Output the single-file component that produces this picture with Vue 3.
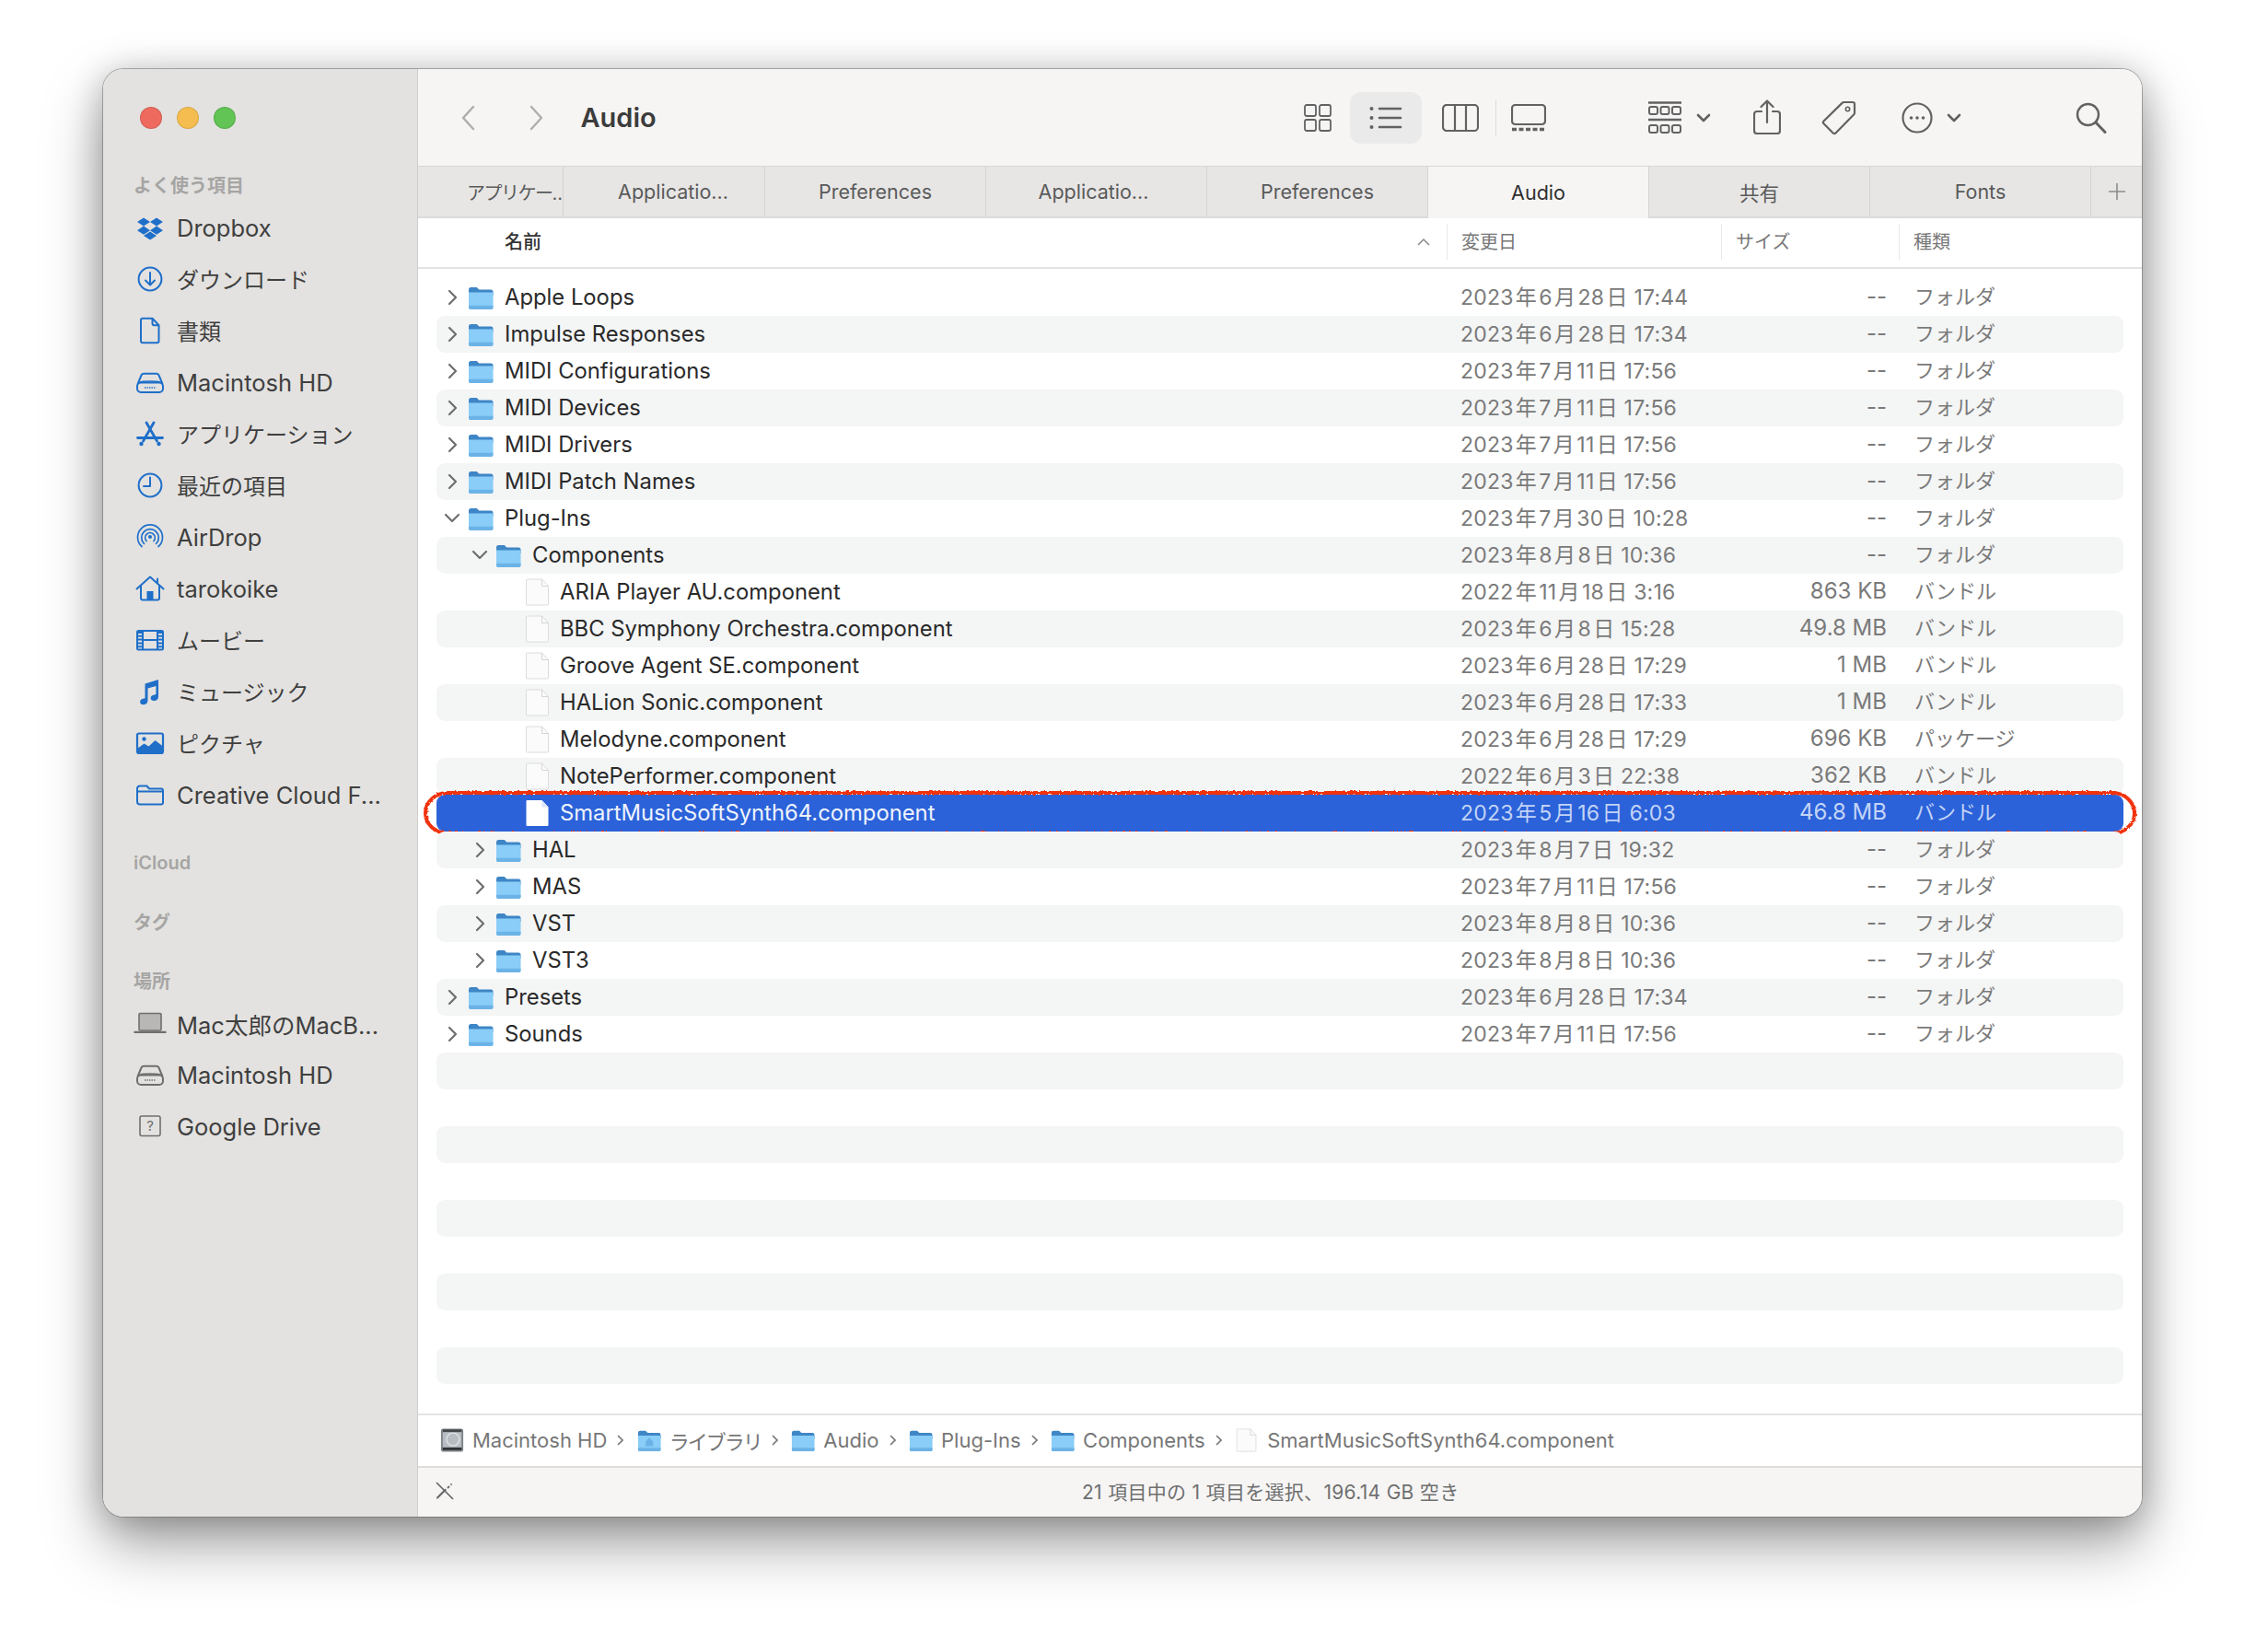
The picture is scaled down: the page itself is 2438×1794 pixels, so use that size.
<script setup>
const favorites = [
  { icon: 'i-dropbox', label: 'Dropbox' },
  { icon: 'i-download', label: 'ダウンロード', jp: true },
  { icon: 'i-doc', label: '書類', jp: true },
  { icon: 'i-hd', label: 'Macintosh HD' },
  { icon: 'i-apps', label: 'アプリケーション', jp: true },
  { icon: 'i-clock', label: '最近の項目', jp: true },
  { icon: 'i-airdrop', label: 'AirDrop' },
  { icon: 'i-home', label: 'tarokoike' },
  { icon: 'i-film', label: 'ムービー', jp: true },
  { icon: 'i-music', label: 'ミュージック', jp: true },
  { icon: 'i-photo', label: 'ピクチャ', jp: true },
  { icon: 'i-folder-line', label: 'Creative Cloud F...' },
]

const places = [
  { icon: 'i-laptop', label: 'Mac太郎のMacB...' },
  { icon: 'i-hd', label: 'Macintosh HD' },
  { icon: 'i-unknown', label: 'Google Drive' },
]

const tabs = [
  { label: 'アプリケー…', cls: 'first' },
  { label: 'Applicatio...', cls: 'second' },
  { label: 'Preferences' },
  { label: 'Applicatio...', cls: 'fourth' },
  { label: 'Preferences' },
  { label: 'Audio', cls: 'active' },
  { label: '共有' },
  { label: 'Fonts' },
]

const F = 'フォルダ'
const B = 'バンドル'
// name, depth, arrow (r / d / none), date, size, kind
const rows = [
  ['Apple Loops', 0, 'r', '2023年6月28日 17:44', '--', F],
  ['Impulse Responses', 0, 'r', '2023年6月28日 17:34', '--', F],
  ['MIDI Configurations', 0, 'r', '2023年7月11日 17:56', '--', F],
  ['MIDI Devices', 0, 'r', '2023年7月11日 17:56', '--', F],
  ['MIDI Drivers', 0, 'r', '2023年7月11日 17:56', '--', F],
  ['MIDI Patch Names', 0, 'r', '2023年7月11日 17:56', '--', F],
  ['Plug-Ins', 0, 'd', '2023年7月30日 10:28', '--', F],
  ['Components', 1, 'd', '2023年8月8日 10:36', '--', F],
  ['ARIA Player AU.component', 2, '', '2022年11月18日 3:16', '863 KB', B],
  ['BBC Symphony Orchestra.component', 2, '', '2023年6月8日 15:28', '49.8 MB', B],
  ['Groove Agent SE.component', 2, '', '2023年6月28日 17:29', '1 MB', B],
  ['HALion Sonic.component', 2, '', '2023年6月28日 17:33', '1 MB', B],
  ['Melodyne.component', 2, '', '2023年6月28日 17:29', '696 KB', 'パッケージ'],
  ['NotePerformer.component', 2, '', '2022年6月3日 22:38', '362 KB', B],
  ['SmartMusicSoftSynth64.component', 2, '', '2023年5月16日 6:03', '46.8 MB', B],
  ['HAL', 1, 'r', '2023年8月7日 19:32', '--', F],
  ['MAS', 1, 'r', '2023年7月11日 17:56', '--', F],
  ['VST', 1, 'r', '2023年8月8日 10:36', '--', F],
  ['VST3', 1, 'r', '2023年8月8日 10:36', '--', F],
  ['Presets', 0, 'r', '2023年6月28日 17:34', '--', F],
  ['Sounds', 0, 'r', '2023年7月11日 17:56', '--', F],
]

const crumbs = [
  { icon: 'i-disk', label: 'Macintosh HD' },
  { icon: 'i-library', label: 'ライブラリ', jp: true },
  { icon: 'i-folder', label: 'Audio' },
  { icon: 'i-folder', label: 'Plug-Ins' },
  { icon: 'i-folder', label: 'Components' },
  { icon: 'i-file', label: 'SmartMusicSoftSynth64.component' },
]

// Finder puts a small gap between digits and kanji
const spaced = (s) => s.replace(/(\d)([年月日])/g, '$1\u200a$2').replace(/([年月])(\d)/g, '$1\u200a$2')
</script>

<template>
  <svg class="defs" width="0" height="0">
    <defs>
      <filter id="rough" x="-2%" y="-30%" width="104%" height="160%">
        <feTurbulence type="fractalNoise" baseFrequency="0.35" numOctaves="2" seed="4" />
        <feDisplacementMap in="SourceGraphic" scale="3.5" />
      </filter>
    </defs>

    <!-- sidebar icons, 36 box -->
    <symbol id="i-dropbox" viewBox="0 0 36 36">
      <path fill="currentColor" d="M4 12l7-4.6 7 4.6-7 4.6zM18 12l7-4.6 7 4.6-7 4.6zM4 21.2l7-4.6 7 4.6-7 4.6zM18 21.2l7-4.6 7 4.6-7 4.6zM11 27l7-4.4 7 4.4-7 4.6z" />
    </symbol>
    <symbol id="i-download" viewBox="0 0 36 36">
      <g fill="none" stroke="currentColor" stroke-width="2" stroke-linecap="round" stroke-linejoin="round">
        <circle cx="18" cy="18" r="12.4" />
        <path d="M18 11v13M13 19.5l5 5 5-5" />
      </g>
    </symbol>
    <symbol id="i-doc" viewBox="0 0 36 36">
      <g fill="none" stroke="currentColor" stroke-width="2" stroke-linejoin="round">
        <path d="M10 4.8h10.500l7 7.500v17a2 2 0 0 1-2 2H10a2 2 0 0 1-2-2V6.800a2 2 0 0 1 2-2z" />
        <path d="M20.500 4.800v5.500a2 2 0 0 0 2 2h5" />
      </g>
    </symbol>
    <symbol id="i-hd" viewBox="0 0 36 36">
      <g fill="none" stroke="currentColor" stroke-width="2" stroke-linejoin="round">
        <path d="M4.500 20l4-9.500a3 3 0 0 1 2.800-1.800h13.400a3 3 0 0 1 2.800 1.800l4 9.500" />
        <rect x="4" y="18.500" width="28" height="10.500" rx="4" />
        <path stroke-width="1.500" stroke-dasharray="1.400 1.100" d="M12 24h12" />
        <path stroke-width="1.600" d="M7 18c4-1.400 18-1.400 22 0" />
      </g>
    </symbol>
    <symbol id="i-apps" viewBox="0 0 36 36">
      <g fill="none" stroke="currentColor" stroke-width="2.800" stroke-linecap="round">
        <path d="M14 6l11.500 20M22 6L10.500 26M4.500 22.500h27" />
      </g>
      <circle cx="8.500" cy="29" r="2.200" fill="currentColor" />
      <circle cx="27.500" cy="29" r="2.200" fill="currentColor" />
    </symbol>
    <symbol id="i-clock" viewBox="0 0 36 36">
      <g fill="none" stroke="currentColor" stroke-width="2" stroke-linecap="round" stroke-linejoin="round">
        <circle cx="18" cy="18" r="12.400" />
        <path d="M18 9.500V19h-7" />
      </g>
    </symbol>
    <symbol id="i-airdrop" viewBox="0 0 36 36">
      <g fill="none" stroke="currentColor" stroke-width="1.700" stroke-linecap="round">
        <path d="M9 28.500a13.500 13.500 0 1 1 18 0" />
        <path d="M11.500 25.500a9.300 9.300 0 1 1 13 0" />
        <path d="M14 22.500a5.300 5.300 0 1 1 8 0" />
      </g>
      <circle cx="18" cy="18" r="2" fill="currentColor" />
    </symbol>
    <symbol id="i-home" viewBox="0 0 36 36">
      <g fill="none" stroke="currentColor" stroke-width="2" stroke-linecap="round" stroke-linejoin="round">
        <path d="M3.500 18.500L18 5.500l14.500 13" />
        <path d="M8 15.500v13a2 2 0 0 0 2 2h16a2 2 0 0 0 2-2v-13" />
        <path d="M26 7.500v4.500" />
      </g>
      <rect x="14.500" y="21" width="7" height="9.500" fill="currentColor" />
    </symbol>
    <symbol id="i-film" viewBox="0 0 36 36">
      <g fill="none" stroke="currentColor" stroke-width="2">
        <rect x="4" y="8" width="28" height="20.500" rx="1.500" />
        <path d="M10 8v20.500M26 8v20.500M10 18h16" />
        <path stroke-width="5" stroke-dasharray="2 1.800" d="M7 9v19M29 9v19" />
      </g>
    </symbol>
    <symbol id="i-music" viewBox="0 0 36 36">
      <path fill="currentColor" d="M12.500 9.500L27 5v18.500c0 3-2.400 4.600-4.800 4.600-2.200 0-3.600-1.300-3.600-3 0-2 1.600-3.300 4-3.700l1.800-.4V12L15.500 14.600v13c0 3-2.400 4.600-4.800 4.600-2.200 0-3.600-1.300-3.600-3 0-2 1.600-3.300 4-3.700l1.400-.3z" />
    </symbol>
    <symbol id="i-photo" viewBox="0 0 36 36">
      <rect x="4" y="7.500" width="28" height="21.500" rx="2" fill="none" stroke="currentColor" stroke-width="2.200" />
      <path fill="currentColor" d="M4 24l7.500-5.500 5 3L23.500 15 32 21.500V29H4z" />
      <circle cx="11.500" cy="13.500" r="2.200" fill="currentColor" />
    </symbol>
    <symbol id="i-folder-line" viewBox="0 0 36 36">
      <g fill="none" stroke="currentColor" stroke-width="2" stroke-linejoin="round">
        <path d="M4 11v14.500a3 3 0 0 0 3 3h23a2 2 0 0 0 2-2V13.500a2 2 0 0 0-2-2H17l-2.500-3H7a3 3 0 0 0-3 2.500z" />
        <path d="M4 14.500h28" />
      </g>
    </symbol>
    <symbol id="i-laptop" viewBox="0 0 36 36">
      <rect x="6" y="7.500" width="24" height="18.500" rx="1.200" fill="#b8b7b5" stroke="#6f6f6f" stroke-width="1.600" />
      <path d="M0.500 27.800h35" stroke="#6f6f6f" stroke-width="2.200" />
    </symbol>
    <symbol id="i-unknown" viewBox="0 0 36 36">
      <rect x="7" y="7" width="22" height="21.500" rx="2" fill="none" stroke="currentColor" stroke-width="1.600" />
      <text x="18" y="23" text-anchor="middle" font-size="15" font-family="Inter" fill="currentColor">?</text>
    </symbol>

    <!-- list icons -->
    <symbol id="i-folder" viewBox="0 0 28 28">
      <path fill="#3e86c6" d="M1 5.500A2.500 2.500 0 0 1 3.500 3h6.300l2.400 2.400H25A2.500 2.500 0 0 1 27.500 8v4H1z" />
      <path fill="#89cdf8" d="M1 8.500h26.500v16.500a2 2 0 0 1-2 2H3a2 2 0 0 1-2-2z" />
      <path fill="#6bb3e6" d="M1 22.800h26.500V25a2 2 0 0 1-2 2H3a2 2 0 0 1-2-2z" />
    </symbol>
    <symbol id="i-library" viewBox="0 0 28 28">
      <path fill="#3e86c6" d="M1 5.500A2.500 2.500 0 0 1 3.500 3h6.300l2.400 2.400H25A2.500 2.500 0 0 1 27.500 8v4H1z" />
      <path fill="#89cdf8" d="M1 8.500h26.500v16.500a2 2 0 0 1-2 2H3a2 2 0 0 1-2-2z" />
      <path fill="#6bb3e6" d="M1 22.800h26.500V25a2 2 0 0 1-2 2H3a2 2 0 0 1-2-2zM14.200 11l4.300 4.500v5.500h-8.600v-5.500z" />
    </symbol>
    <symbol id="i-file" viewBox="0 0 28 30">
      <path fill="#fbfbfb" stroke="#dcdcdc" stroke-width="1" d="M2.500 1h16l7 7.500V28a1 1 0 0 1-1 1h-22a1 1 0 0 1-1-1V2a1 1 0 0 1 1-1z" />
      <path fill="none" stroke="#d5d5d5" stroke-width="1" d="M18.500 1v7.500h7" />
    </symbol>
    <symbol id="i-file-sel" viewBox="0 0 28 30">
      <path fill="#fff" d="M2.500 1h16l7 7.500V28a1 1 0 0 1-1 1h-22a1 1 0 0 1-1-1V2a1 1 0 0 1 1-1z" />
      <path fill="#dce6f8" d="M18.500 1v7.500h7z" />
    </symbol>
    <symbol id="i-disk" viewBox="0 0 28 28">
      <rect x="1" y="0.500" width="26" height="27" rx="2.500" fill="#7c8186" />
      <rect x="3" y="3" width="22" height="19.500" fill="#b7bdc2" />
      <circle cx="15" cy="13" r="7.500" fill="none" stroke="#dfe3e6" stroke-width="1.500" />
      <rect x="3" y="1.500" width="22" height="3" fill="#44474a" />
      <rect x="3" y="22.500" width="22" height="3" fill="#2f3133" />
    </symbol>

    <!-- toolbar icons -->
    <symbol id="i-grid" viewBox="0 0 30 30">
      <g fill="none" stroke="currentColor" stroke-width="1.800">
        <rect x="1" y="1" width="12" height="12" rx="2" />
        <rect x="17" y="1" width="12" height="12" rx="2" />
        <rect x="1" y="17" width="12" height="12" rx="2" />
        <rect x="17" y="17" width="12" height="12" rx="2" />
      </g>
    </symbol>
    <symbol id="i-list" viewBox="0 0 36 26">
      <path fill="none" stroke="currentColor" stroke-width="2.600" stroke-linecap="round" d="M11 3h23M11 13h23M11 23h23" />
      <circle cx="2.500" cy="3" r="2" fill="currentColor" />
      <circle cx="2.500" cy="13" r="2" fill="currentColor" />
      <circle cx="2.500" cy="23" r="2" fill="currentColor" />
    </symbol>
    <symbol id="i-columns" viewBox="0 0 40 30">
      <rect x="1" y="1" width="38" height="28" rx="4" fill="none" stroke="currentColor" stroke-width="2.200" />
      <path fill="none" stroke="currentColor" stroke-width="2.200" d="M14 1v28M26 1v28" />
    </symbol>
    <symbol id="i-gallery" viewBox="0 0 38 30">
      <rect x="1" y="1" width="36" height="21" rx="3.500" fill="none" stroke="currentColor" stroke-width="2.200" />
      <path fill="none" stroke="currentColor" stroke-width="3.500" stroke-dasharray="5 2.500" d="M1 27.500h36" />
    </symbol>
    <symbol id="i-group" viewBox="0 0 36 36">
      <g fill="none" stroke="currentColor">
        <path stroke-width="2.400" d="M0 1.500h36M0 20h36" />
        <g stroke-width="2">
          <rect x="1" y="6" width="9" height="8" rx="2" />
          <rect x="13.500" y="6" width="9" height="8" rx="2" />
          <rect x="26" y="6" width="9" height="8" rx="2" />
          <rect x="1" y="26" width="9" height="8" rx="2" />
          <rect x="13.500" y="26" width="9" height="8" rx="2" />
          <rect x="26" y="26" width="9" height="8" rx="2" />
        </g>
      </g>
    </symbol>
    <symbol id="i-share" viewBox="0 0 30 38">
      <g fill="none" stroke="currentColor" stroke-width="2.200" stroke-linecap="round" stroke-linejoin="round">
        <path d="M9 13H4a3 3 0 0 0-3 3v18a3 3 0 0 0 3 3h22a3 3 0 0 0 3-3V16a3 3 0 0 0-3-3h-5" />
        <path d="M15 25V1.500M8.500 8L15 1.500 21.500 8" />
      </g>
    </symbol>
    <symbol id="i-tag" viewBox="0 0 38 38">
      <g fill="none" stroke="currentColor" stroke-width="2.200" stroke-linejoin="round">
        <path d="M24.500 2h9.500a2 2 0 0 1 2 2v9.500a3 3 0 0 1-.9 2L15.500 35.500a2 2 0 0 1-2.800 0L2.500 25.300a2 2 0 0 1 0-2.800L22.500 2.900a3 3 0 0 1 2-.9z" />
      </g>
      <circle cx="28.500" cy="9.500" r="2.200" fill="none" stroke="currentColor" stroke-width="1.600" />
    </symbol>
    <symbol id="i-more" viewBox="0 0 34 34">
      <circle cx="17" cy="17" r="15.500" fill="none" stroke="currentColor" stroke-width="2.200" />
      <circle cx="10.500" cy="17" r="1.800" fill="currentColor" />
      <circle cx="17" cy="17" r="1.800" fill="currentColor" />
      <circle cx="23.500" cy="17" r="1.800" fill="currentColor" />
    </symbol>
    <symbol id="i-search" viewBox="0 0 34 34">
      <circle cx="13.500" cy="13.500" r="11.500" fill="none" stroke="currentColor" stroke-width="2.400" />
      <path d="M22 22l10 10.500" fill="none" stroke="currentColor" stroke-width="3" stroke-linecap="round" />
    </symbol>
    <symbol id="i-tools" viewBox="0 0 20 20">
      <path d="M1 1l18 18" fill="none" stroke="currentColor" stroke-width="1.700" />
      <path d="M1 19l2-1 9-9-1.500-1.500-9 9z" fill="currentColor" />
      <path d="M13 7l2-2M16.500 3.500l1-1" fill="none" stroke="currentColor" stroke-width="1.800" />
    </symbol>
  </svg>

  <div class="page">
    <div class="window">
      <aside class="sidebar">
        <div class="lights">
          <span class="light red"></span>
          <span class="light yellow"></span>
          <span class="light green"></span>
        </div>

        <div class="section-title fav-title">よく使う項目</div>
        <div class="side-item" v-for="item in favorites" :key="item.label">
          <svg class="side-icon"><use :href="'#' + item.icon" /></svg>
          <span :class="{ jp: item.jp }">{{ item.label }}</span>
        </div>

        <div class="section-title cloud-title">iCloud</div>
        <div class="section-title tag-title">タグ</div>
        <div class="section-title place-title">場所</div>
        <div class="side-item gray" v-for="item in places" :key="item.icon">
          <svg class="side-icon"><use :href="'#' + item.icon" /></svg>
          <span>{{ item.label }}</span>
        </div>
      </aside>

      <main class="main">
        <header class="toolbar">
          <svg class="nav-arrow" viewBox="0 0 20 30"><path d="M15 3L4 15l11 12" /></svg>
          <svg class="nav-arrow next" viewBox="0 0 20 30"><path d="M5 3l11 12L5 27" /></svg>
          <h1 class="title">Audio</h1>

          <svg class="tool grid-btn"><use href="#i-grid" /></svg>
          <div class="pill"><svg class="tool list-btn"><use href="#i-list" /></svg></div>
          <svg class="tool col-btn"><use href="#i-columns" /></svg>
          <span class="tool-sep"></span>
          <svg class="tool gal-btn"><use href="#i-gallery" /></svg>

          <svg class="tool group-btn"><use href="#i-group" /></svg>
          <svg class="caret" viewBox="0 0 16 10"><path d="M2 2l6 6 6-6" /></svg>
          <svg class="tool share-btn"><use href="#i-share" /></svg>
          <svg class="tool tag-btn"><use href="#i-tag" /></svg>
          <svg class="tool more-btn"><use href="#i-more" /></svg>
          <svg class="caret more-caret" viewBox="0 0 16 10"><path d="M2 2l6 6 6-6" /></svg>
          <svg class="tool search-btn"><use href="#i-search" /></svg>
        </header>

        <nav class="tabs">
          <div v-for="(t, i) in tabs" :key="i" class="tab" :class="t.cls">
            <span>{{ t.label }}</span>
          </div>
          <div class="tab plus">
            <svg viewBox="0 0 20 20" width="20" height="20"><path d="M10 1v18M1 10h18" /></svg>
          </div>
        </nav>

        <div class="col-head">
          <div class="col name-col">名前
            <svg class="sort" viewBox="0 0 14 9"><path d="M1 8l6-6 6 6" /></svg>
          </div>
          <div class="col date-col">変更日</div>
          <div class="col size-col">サイズ</div>
          <div class="col kind-col">種類</div>
        </div>

        <div class="list">
          <div
            v-for="r in rows"
            :key="r[0]"
            class="row"
            :class="{ selected: r[0].startsWith('SmartMusic') }"
          >
            <div class="name" :style="{ paddingLeft: r[1] * 30 + 'px' }">
              <span class="arrow">
                <svg v-if="r[2] === 'r'" viewBox="0 0 12 18" width="12" height="18"><path d="M3 2l7 7-7 7" /></svg>
                <svg v-if="r[2] === 'd'" viewBox="0 0 18 12" width="18" height="12"><path d="M2 2l7 7 7-7" /></svg>
              </span>
              <svg class="row-icon" :class="{ doc: !r[2] }">
                <use :href="r[2] ? '#i-folder' : r[0].startsWith('SmartMusic') ? '#i-file-sel' : '#i-file'" />
              </svg>
              <span class="name-text">{{ r[0] }}</span>
            </div>
            <div class="date">{{ spaced(r[3]) }}</div>
            <div class="size">{{ r[4] }}</div>
            <div class="kind">{{ r[5] }}</div>
            <svg v-if="r[0].startsWith('SmartMusic')" class="scribble" viewBox="0 0 1862 50" preserveAspectRatio="none">
              <rect x="3" y="3" width="1856" height="44" rx="24" filter="url(#rough)" />
            </svg>
          </div>
          <div v-for="n in 9" :key="'empty' + n" class="row"></div>
        </div>

        <div class="pathbar">
          <template v-for="(c, i) in crumbs" :key="c.label">
            <svg class="crumb-icon"><use :href="'#' + c.icon" /></svg>
            <span class="crumb" :class="{ jp: c.jp }">{{ c.label }}</span>
            <svg v-if="i < crumbs.length - 1" class="crumb-sep" viewBox="0 0 8 12"><path d="M2 1l5 5-5 5" /></svg>
          </template>
        </div>

        <footer class="status">
          <svg class="tools-icon"><use href="#i-tools" /></svg>
          <span class="status-text">21 項目中の 1 項目を選択、196.14 GB 空き</span>
        </footer>
      </main>
    </div>
  </div>
</template>

<style>
html, body {
  margin: 0;
  background: #fff;
}
</style>

<style scoped>
.defs {
  position: absolute;
}

.page {
  width: 2438px;
  height: 1794px;
  padding: 75px 0 0 112px;
  box-sizing: border-box;
  overflow: hidden;
  font-family: Inter, "Noto Sans CJK JP", sans-serif;
}

.window {
  width: 2214px;
  height: 1572px;
  display: flex;
  border-radius: 22px;
  background: #fff;
  box-shadow: 0 0 0 1px rgba(90, 90, 90, 0.45), 0 30px 64px rgba(0, 0, 0, 0.37), 0 4px 36px rgba(0, 0, 0, 0.22);
  overflow: hidden;
}

.sidebar {
  width: 342px;
  flex: none;
  box-sizing: border-box;
  padding-left: 33px;
  background: #e3e2e0;
  border-right: 1px solid #cfcecd;
  color: #3f3f3f;
}

.lights {
  display: flex;
  gap: 16px;
  margin: 41px 0 0 7px;
}
.light {
  width: 24px;
  height: 24px;
  box-sizing: border-box;
  border-radius: 50%;
  border: 1px solid rgba(0, 0, 0, 0.12);
}
.red { background: #ee6a5f; }
.yellow { background: #f5bd4f; }
.green { background: #61c454; }

.section-title {
  height: 28px;
  line-height: 28px;
  font-size: 20px;
  font-weight: 600;
  color: #a6a5a4;
}
.fav-title { margin: 48px 0 3px; }
.cloud-title { margin-top: 32px; }
.tag-title { margin-top: 37px; }
.place-title { margin: 36px 0 3px; }

.side-item {
  height: 56px;
  display: flex;
  align-items: center;
  gap: 11px;
  font-size: 25.5px;
  white-space: nowrap;
}
.side-item .jp {
  font-size: 24px;
  margin-top: -2px;
}
.side-icon {
  width: 36px;
  height: 36px;
  flex: none;
  color: #1f6fc9;
}
.gray .side-icon {
  color: #6f6f6f;
}

.main {
  flex: 1;
  min-width: 0;
  display: flex;
  flex-direction: column;
}

.toolbar {
  height: 105px;
  flex: none;
  display: flex;
  align-items: center;
  background: #f6f5f4;
  color: #626262;
}
.nav-arrow {
  width: 20px;
  height: 30px;
  margin-left: 45px;
  fill: none;
  stroke: #aeaeae;
  stroke-width: 2.4;
  stroke-linecap: round;
  stroke-linejoin: round;
}
.nav-arrow.next {
  margin-left: 53px;
}
.title {
  margin: 0 0 0 38.500px;
  width: 80px;
  font-size: 29px;
  font-weight: 600;
  color: #3c3c3c;
  white-space: nowrap;
}
.tool {
  flex: none;
}
.grid-btn { width: 30px; height: 30px; margin-left: 705.500px; }
.pill {
  width: 78px;
  height: 56px;
  margin-left: 20px;
  display: flex;
  align-items: center;
  justify-content: center;
  background: #ebeaea;
  border-radius: 12px;
}
.list-btn { width: 36px; height: 26px; }
.col-btn { width: 40px; height: 30px; margin-left: 22px; }
.tool-sep { width: 1px; height: 40px; margin-left: 18px; background: #dddcdb; }
.gal-btn { width: 38px; height: 30px; margin-left: 16px; }
.group-btn { width: 36px; height: 36px; margin-left: 111px; }
.caret {
  width: 16px;
  height: 10px;
  margin-left: 16px;
  fill: none;
  stroke: #626262;
  stroke-width: 2.6;
  stroke-linecap: round;
  stroke-linejoin: round;
}
.share-btn { width: 30px; height: 38px; margin: -2px 0 0 46px; }
.tag-btn { width: 38px; height: 38px; margin-left: 44px; }
.more-btn { width: 34px; height: 34px; margin-left: 48.500px; }
.more-caret { margin-left: 15px; }
.search-btn { width: 34px; height: 34px; margin-left: 124px; }

.tabs {
  height: 57px;
  flex: none;
  display: flex;
  box-sizing: border-box;
  background: #e7e6e5;
  border-top: 1px solid #d8d7d6;
  border-bottom: 2px solid #dcdbda;
}
.tab {
  width: 240px;
  flex: none;
  box-sizing: border-box;
  display: flex;
  align-items: center;
  justify-content: center;
  border-right: 1px solid #d5d4d3;
  font-size: 21.500px;
  color: #5a5a5a;
  white-space: nowrap;
  overflow: hidden;
}
.tab.first {
  width: 158px;
  justify-content: flex-start;
  padding-left: 53px;
  font-size: 20px;
  letter-spacing: -1.500px;
}
.tab.second {
  width: 219px;
  padding-left: 20px;
}
.tab.fourth {
  padding-right: 6px;
}
.tab.active {
  background: #f6f5f4;
  color: #2f2f2f;
  margin-bottom: -2px;
}
.tab.plus {
  width: 55px;
  border-right: none;
}
.plus path {
  fill: none;
  stroke: #8c8c8c;
  stroke-width: 1.6;
}

.col-head {
  height: 55px;
  flex: none;
  box-sizing: border-box;
  display: flex;
  align-items: center;
  padding-bottom: 2px;
  border-bottom: 2px solid #e3e3e3;
  font-size: 20px;
  color: #777;
}
.col {
  height: 39px;
  display: flex;
  align-items: center;
  box-sizing: border-box;
  padding-left: 15px;
  padding-bottom: 2px;
  border-left: 1px solid #e8e8e8;
}
.name-col {
  width: 1117px;
  padding-left: 94px;
  border-left: none;
  color: #333;
  font-weight: 500;
  position: relative;
}
.date-col { width: 298px; }
.size-col { width: 193px; }
.kind-col { flex: 1; }
.sort {
  position: absolute;
  right: 18px;
  top: 15px;
  width: 14px;
  height: 9px;
  fill: none;
  stroke: #8a8a8a;
  stroke-width: 1.5;
}

.list {
  flex: 1;
  padding: 11px 20px 0;
}
.row {
  height: 40px;
  display: grid;
  grid-template-columns: 1112px 270px 193px 257px;
  align-items: center;
  position: relative;
  border-radius: 9px;
  font-size: 24px;
  color: #7a7a7a;
  white-space: nowrap;
}
.row:nth-child(even) {
  background: #f4f5f5;
}
.row.selected {
  background: #2b62d9;
  color: #c3d4f6;
}
.name {
  display: flex;
  align-items: center;
  color: #2a2a2a;
}
.selected .name {
  color: #eef3fd;
}
.name-text {
  font-size: 23.800px;
  margin-bottom: 1px;
}
.arrow {
  width: 34px;
  flex: none;
  display: flex;
  align-items: center;
  justify-content: center;
}
.arrow path {
  fill: none;
  stroke: #6e6e6e;
  stroke-width: 2.2;
  stroke-linecap: round;
  stroke-linejoin: round;
}
.row-icon {
  width: 28px;
  height: 28px;
  flex: none;
  margin-right: 12px;
}
.row-icon.doc {
  height: 30px;
}
.name .doc {
  transform: translateX(2px);
}
.date {
  font-size: 23px;
  letter-spacing: 0.200px;
  margin-bottom: 5px;
}
.size {
  text-align: right;
  margin-bottom: 4px;
}
.kind {
  padding-left: 30px;
  font-size: 22px;
  margin-bottom: 6px;
}
.scribble {
  position: absolute;
  left: -15px;
  top: -5px;
  width: 1862px;
  height: 50px;
  overflow: visible;
  pointer-events: none;
}
.scribble rect {
  fill: none;
  stroke: #f1330e;
  stroke-width: 4;
}

.pathbar {
  height: 57px;
  flex: none;
  box-sizing: border-box;
  display: flex;
  align-items: center;
  padding-left: 24px;
  padding-bottom: 2px;
  border-top: 2px solid #e3e3e3;
  font-size: 22px;
  color: #777;
  white-space: nowrap;
}
.crumb.jp {
  letter-spacing: -2px;
}
.crumb-icon {
  width: 26px;
  height: 26px;
  flex: none;
  margin-right: 9px;
}
.crumb-sep {
  width: 8px;
  height: 12px;
  margin: 0 14.500px 0 10px;
  fill: none;
  stroke: #777;
  stroke-width: 1.6;
}

.status {
  height: 55px;
  flex: none;
  box-sizing: border-box;
  display: flex;
  align-items: center;
  padding-bottom: 4px;
  background: #f6f5f4;
  border-top: 2px solid #dedddc;
  font-size: 21px;
  letter-spacing: 0.300px;
  color: #6f6f6f;
  white-space: nowrap;
}
.tools-icon {
  width: 20px;
  height: 20px;
  margin-left: 19px;
  color: #666;
  flex: none;
}
.status-text {
  margin-left: 682px;
}
</style>
